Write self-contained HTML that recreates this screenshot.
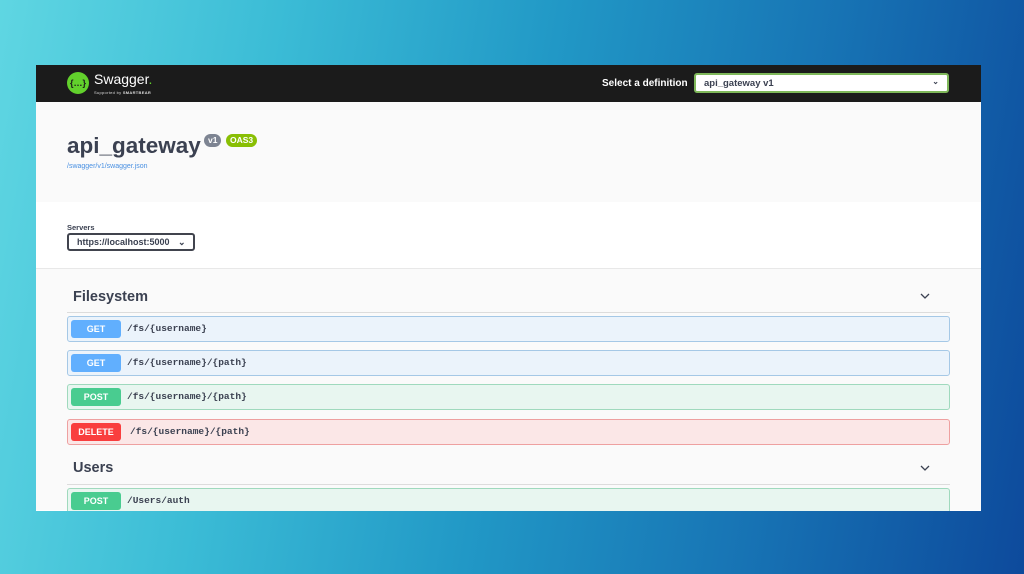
<!DOCTYPE html>
<html><head><style>
*{margin:0;padding:0;box-sizing:border-box}
body{width:1024px;height:574px;overflow:hidden;font-family:"Liberation Sans",sans-serif;
background:linear-gradient(100deg,#5fd6e2 0%,#3bbcd6 25%,#2198c6 50%,#1773b4 75%,#0d4a9c 100%);position:relative}
.card{position:absolute;left:36px;top:65px;width:945px;height:446px;background:#fff;overflow:hidden}
.top{height:37px;background:#1b1b1b;position:relative}
.logo{position:absolute;left:31px;top:7px;width:22px;height:22px;border-radius:50%;background:#62d12c;color:#1b1b1b;font-size:9px;font-weight:bold;text-align:center;line-height:22px}
.brand{position:absolute;left:58px;top:6px;color:#fff;font-size:14px}
.sb{position:absolute;left:58px;top:25px;color:#ddd;font-size:4px;letter-spacing:.3px;white-space:nowrap}
.def{position:absolute;left:566px;top:13px;color:#fff;font-weight:bold;font-size:10px}
.sel{position:absolute;left:658px;top:8px;width:255px;height:20px;background:#fff;border:2px solid #7fb85a;border-radius:3px;font-size:9.5px;font-weight:bold;color:#3b4151;padding:3px 8px}
.sel span{position:absolute;right:8px;top:2px;font-size:8px}
.info{height:100px;background:#fafafa;position:relative}
.info h1{position:absolute;left:31px;top:31px;font-size:22.5px;color:#3b4151;font-weight:bold}
.b{position:absolute;top:32px;height:13px;border-radius:7px;color:#fff;font-size:8.5px;font-weight:bold;padding:1px 4px;line-height:11px}
.link{position:absolute;left:31px;top:61px;font-size:7px;color:#4990e2}
.servers{height:67px;border-bottom:1px solid #e8e8e8;position:relative}
.servers .l{position:absolute;left:31px;top:21px;font-size:7.5px;font-weight:bold;color:#3b4151}
.servers .s{position:absolute;left:31px;top:31px;width:128px;height:18px;border:2px solid #41444e;border-radius:3px;font-size:9px;font-weight:bold;color:#3b4151;padding:2px 8px;white-space:nowrap}
.ops{background:#fafafa;height:241px;position:relative}
.tag{position:absolute;left:37px;font-size:14.5px;font-weight:bold;color:#3b4151}
.hr{position:absolute;left:31px;width:883px;height:1px;background:#dcdcdc}
.chev{position:absolute;left:884px;width:10px;height:10px}
.op{position:absolute;left:31px;width:883px;height:26px;border-radius:3px;border:1px solid}
.m{position:absolute;left:3px;top:3px;width:50px;height:18px;border-radius:3px;color:#fff;font-size:9px;font-weight:bold;text-align:center;line-height:18px}
.p{position:absolute;top:6px;font-family:"Liberation Mono",monospace;font-weight:bold;font-size:9.5px;color:#3b4151}
.get{background:#ebf3fb;border-color:#a5c8e6}.get .m{background:#61affe}
.post{background:#e8f6f0;border-color:#9fd9bd}.post .m{background:#49cc90}
.del{background:#fbe7e7;border-color:#eea0a0}.del .m{background:#f93e3e}
</style></head><body>
<div class="card">
<div class="top"><div class="logo">{…}</div><div class="brand">Swagger<span style="color:#62d12c">.</span></div><div class="sb">Supported by <b>SMARTBEAR</b></div>
<div class="def">Select a definition</div><div class="sel">api_gateway v1<span>⌄</span></div></div>
<div class="info"><h1>api_gateway</h1><span class="b" style="left:168px;background:#7d8492">v1</span><span class="b" style="left:190px;background:#89bf04">OAS3</span><div class="link">/swagger/v1/swagger.json</div></div>
<div class="servers"><div class="l">Servers</div><div class="s">https://localhost:5000 <span style="margin-left:6px">⌄</span></div></div>
<div class="ops">
<div class="tag" style="top:20px">Filesystem</div>
<svg class="chev" style="top:22px" viewBox="0 0 10 10"><path d="M1 3l4 4 4-4" fill="none" stroke="#3b4151" stroke-width="1.3"/></svg>
<div class="hr" style="top:43px"></div>
<div class="op get" style="top:47px"><div class="m">GET</div><div class="p" style="left:59px">/fs/{username}</div></div>
<div class="op get" style="top:81px"><div class="m">GET</div><div class="p" style="left:59px">/fs/{username}/{path}</div></div>
<div class="op post" style="top:115px"><div class="m">POST</div><div class="p" style="left:59px">/fs/{username}/{path}</div></div>
<div class="op del" style="top:150px"><div class="m">DELETE</div><div class="p" style="left:62px">/fs/{username}/{path}</div></div>
<div class="tag" style="top:191px">Users</div>
<svg class="chev" style="top:194px" viewBox="0 0 10 10"><path d="M1 3l4 4 4-4" fill="none" stroke="#3b4151" stroke-width="1.3"/></svg>
<div class="hr" style="top:215px"></div>
<div class="op post" style="top:219px"><div class="m">POST</div><div class="p" style="left:59px">/Users/auth</div></div>
</div>
</div>
</body></html>
